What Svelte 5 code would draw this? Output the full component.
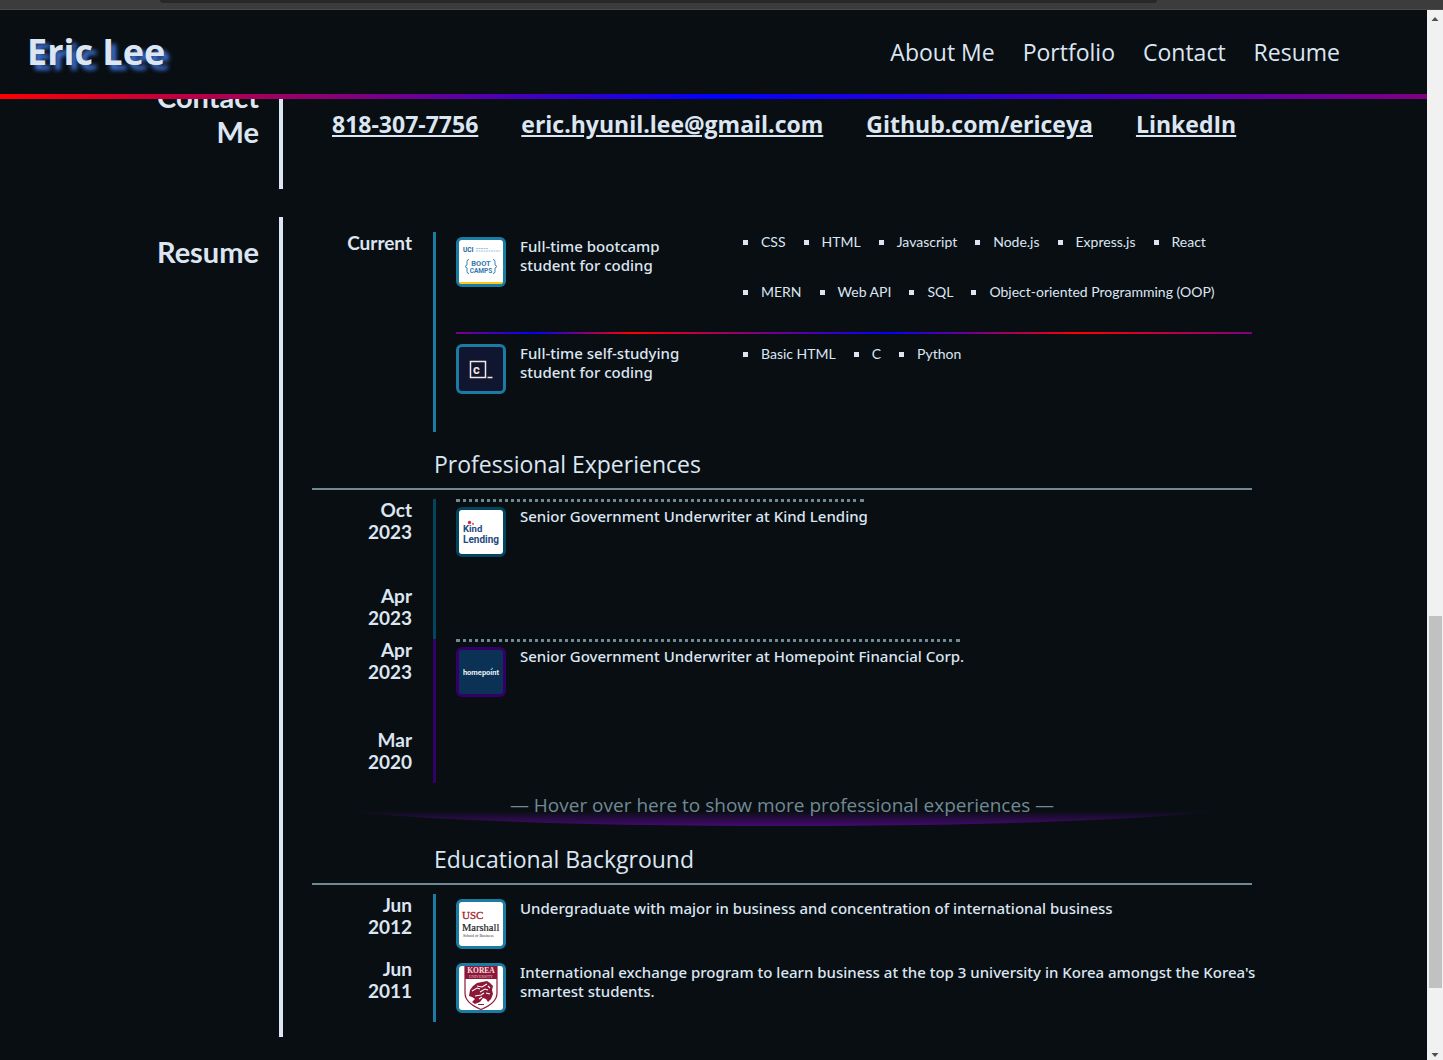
<script>
  const navLinks = ['About Me', 'Portfolio', 'Contact', 'Resume'];
  const contacts = ['818-307-7756', 'eric.hyunil.lee@gmail.com', 'Github.com/ericeya', 'LinkedIn'];
  const studies = [
    {
      logo: 'uci',
      text: 'Full-time bootcamp student for coding',
      skills: [
        ['CSS', 'HTML', 'Javascript', 'Node.js', 'Express.js', 'React'],
        ['MERN', 'Web API', 'SQL', 'Object-oriented Programming (OOP)'],
      ],
    },
    {
      logo: 'codecademy',
      text: 'Full-time self-studying student for coding',
      skills: [['Basic HTML', 'C', 'Python']],
    },
  ];
  const jobs = [
    { logo: 'kind', tone: 'navy', to: ['Oct', '2023'], from: ['Apr', '2023'], text: 'Senior Government Underwriter at Kind Lending' },
    { logo: 'homepoint', tone: 'violet', to: ['Apr', '2023'], from: ['Mar', '2020'], text: 'Senior Government Underwriter at Homepoint Financial Corp.' },
  ];
  const schools = [
    { logo: 'usc', date: ['Jun', '2012'], text: 'Undergraduate with major in business and concentration of international business' },
    { logo: 'korea', date: ['Jun', '2011'], text: "International exchange program to learn business at the top 3 university in Korea amongst the Korea's smartest students." },
  ];
</script>

{#snippet date(parts)}
  <p class="date">{parts[0]}<br />{parts[1]}</p>
{/snippet}

{#snippet logo(name)}
  <svg class="logo" viewBox="0 0 44 44" aria-hidden="true">
    {#if name === 'uci'}
      <rect width="44" height="44" fill="#fff" />
      <text x="4" y="12" class="sans heavy" font-size="6.500" fill="#1c5f9c">UCI</text>
      <path d="M17 8.500h12M17 11h25" stroke="#a9c4dc" stroke-width="1" stroke-dasharray="2 .5" />
      <path d="M10 19.500q-2 0-2 2v3.500l-2 1.500 2 1.500v3.500q0 2 2 2M34 19.500q2 0 2 2v3.500l2 1.500-2 1.500v3.500q0 2-2 2" fill="none" stroke="#3c80b4" />
      <text x="22" y="25.500" class="sans heavy mid" font-size="7.500" fill="#3477ae">BOOT</text>
      <text x="22" y="33" class="sans heavy mid" font-size="6.500" fill="#3477ae">CAMPS</text>
      <rect y="42" width="44" height="2" fill="#fdc913" />
    {:else if name === 'codecademy'}
      <rect width="44" height="44" fill="#10162f" />
      <path d="M11.500 14.500h15v16h-15zM28.500 30.500h5" fill="none" stroke="#f3e6e2" stroke-width="1.500" />
      <text x="17.500" y="27" class="sans heavy mid" font-size="13" fill="#f3e6e2">c</text>
    {:else if name === 'kind'}
      <rect width="44" height="44" fill="#fff" />
      <circle cx="10.500" cy="12.500" r="1.700" fill="#d8283f" />
      <circle cx="14" cy="13.800" r="1.100" fill="#ee5a45" />
      <text x="4" y="21.500" class="sans heavy" font-size="9.500" fill="#1f4a80">Kind</text>
      <text x="4" y="32.500" class="sans heavy" font-size="10" fill="#1f4a80">Lending</text>
    {:else if name === 'homepoint'}
      <rect width="44" height="44" fill="#0b3155" />
      <text x="22" y="25" class="sans heavy mid" font-size="7.500" fill="#e9eff4">homepoint</text>
      <path d="M32.500 18.500h1.500" stroke="#26b5d8" stroke-width="1.500" />
    {:else if name === 'usc'}
      <rect width="44" height="44" fill="#fff" />
      <text x="3" y="17" class="serif" font-size="11" fill="#a2242a" stroke="#a2242a" stroke-width=".3">USC</text>
      <text x="3" y="28.500" class="serif" font-size="10.500" fill="#222" stroke="#222" stroke-width=".2">Marshall</text>
      <text x="4" y="35" class="serif" font-size="4" fill="#333">School of Business</text>
    {:else}
      <rect width="44" height="44" fill="#fff" />
      <path d="M6 0h32v27q0 10-16 16.500Q6 37 6 27z" fill="#fff" stroke="#8d1737" stroke-width="1.200" />
      <path d="M6 0h32v13H6z" fill="#8d1737" />
      <text x="22" y="7" class="serif heavy mid" font-size="7.500" fill="#f5e3e8">KOREA</text>
      <text x="22" y="11.900" class="serif mid" font-size="4" fill="#e7c2cd">UNIVERSITY</text>
      <path d="M11 24l3-4 4-3 5-1 5-1 3 2 3 3-1 4 1 4-2 5-3 3-2-3-3-1-3 4-5 2-3-2 3-3-3-2-3-1z" fill="#8d1737" />
      <path d="M13 25l5-3 3 1M18 20l5 1 5-3M21 26l5-3 3 1M16 30l6-1 3-2M27 27l4 1M29 20l2 2M20 33l3-2" fill="none" stroke="#fff" stroke-width="1.100" />
      <path d="M19 38.500h6" stroke="#8d1737" stroke-width="1.200" />
    {/if}
  </svg>
{/snippet}

<div class="page">
  <div class="chrome"><div class="omnibox"></div></div>
  <div class="viewport">
    <div class="site">
      <header>
        <h1>Eric Lee</h1>
        <nav>
          {#each navLinks as link}<a href="#top">{link}</a>{/each}
        </nav>
      </header>

      <main>
        <section class="contact">
          <h2>Contact<br />Me</h2>
          <div class="body links">
            {#each contacts as contact}<a href="#contact">{contact}</a>{/each}
          </div>
        </section>

        <section class="resume">
          <h2>Resume</h2>
          <div class="body">
            <div class="entry current">
              <div class="dates"><p class="date">Current</p></div>
              <div class="detail teal">
                {#each studies as study}
                  <article class="study">
                    {@render logo(study.logo)}
                    <p>{study.text}</p>
                    <div class="skills">
                      {#each study.skills as row}
                        <ul>
                          {#each row as skill}<li>{skill}</li>{/each}
                        </ul>
                      {/each}
                    </div>
                  </article>
                {/each}
              </div>
            </div>

            <h3>Professional Experiences</h3>
            {#each jobs as job}
              <div class="entry job">
                <div class="dates">
                  {@render date(job.to)}
                  {@render date(job.from)}
                </div>
                <div class="detail {job.tone}">
                  <article class="dotted">
                    {@render logo(job.logo)}
                    <p>{job.text}</p>
                  </article>
                </div>
              </div>
            {/each}
            <p class="more">— Hover over here to show more professional experiences —</p>

            <h3>Educational Background</h3>
            {#each schools as school}
              <div class="entry school">
                <div class="dates">{@render date(school.date)}</div>
                <div class="detail teal">
                  <article>
                    {@render logo(school.logo)}
                    <p>{school.text}</p>
                  </article>
                </div>
              </div>
            {/each}
          </div>
        </section>
      </main>
    </div>

    <div class="scrollbar" aria-hidden="true">
      <svg viewBox="0 0 16 17"><path d="M4.500 11h7L8 7z" fill="#505050" /></svg>
      <div class="track"><div class="thumb"></div></div>
      <svg viewBox="0 0 16 17"><path d="M4.500 10h7L8 14z" fill="#505050" /></svg>
    </div>
  </div>
</div>

<style>
  :global(body) {
    background: #090e12;
  }
  .page {
    display: flex;
    flex-direction: column;
    height: 100vh;
    overflow: hidden;
    color: #dce6f2;
    font-family: 'Trebuchet MS', 'Open Sans', sans-serif;
    font-size: 15px;
    line-height: 19px;
    font-variant-ligatures: none;
  }
  h1, h2, h3, p, ul {
    margin: 0;
    padding: 0;
  }
  a {
    color: inherit;
  }
  .chrome {
    flex: none;
    height: 9px;
    padding: 0 286px 0 160px;
    background: #3c3c3c;
    border-bottom: 1px solid #4a4a4a;
  }
  .omnibox {
    height: 3px;
    background: #282828;
    border-radius: 0 0 8px 8px;
  }
  .viewport {
    flex: 1;
    min-height: 0;
    display: grid;
    grid-template-columns: minmax(0, 1fr) 16px;
  }
  .site {
    display: flex;
    flex-direction: column;
    min-height: 0;
  }
  header {
    flex: none;
    display: flex;
    align-items: center;
    justify-content: space-between;
    height: 84px;
    padding: 0 87px 0 27px;
    border-bottom: 5px solid;
    border-image: linear-gradient(to right, red, blue, purple) 1;
  }
  h1 {
    font-size: 36px;
    font-weight: 700;
    line-height: 44px;
    text-shadow: 5px 5px 4px #3f74d8;
  }
  nav {
    display: flex;
    gap: 28px;
    font-size: 23px;
    line-height: 30px;
  }
  nav a {
    text-decoration: none;
  }
  main {
    flex: 1;
    min-height: 0;
    overflow: hidden;
  }
  section {
    display: grid;
    grid-template-columns: 279px minmax(0, 1fr);
    margin-bottom: 28px;
  }
  h2 {
    padding-right: 20px;
    font-family: Lato, sans-serif;
    font-size: 29px;
    line-height: 35px;
    text-align: right;
  }
  .body {
    border-left: 4px solid #dce6f2;
    padding: 15px 175px 15px 29px;
  }
  .contact {
    height: 110px;
    margin-top: -20px;
  }
  .links {
    display: flex;
    gap: 43px;
    padding: 29px 20px 0 49px;
    font-size: 23px;
    line-height: 32px;
    font-weight: 700;
    white-space: nowrap;
  }
  .resume h2 {
    padding-top: 17px;
  }
  .entry {
    display: grid;
    grid-template-columns: 121px minmax(0, 1fr);
  }
  .dates {
    display: flex;
    flex-direction: column;
    justify-content: space-between;
    padding-right: 21px;
    text-align: right;
  }
  .date {
    font-family: Lato, sans-serif;
    font-size: 19px;
    line-height: 22px;
    font-weight: bold;
  }
  .detail {
    border-left: 3px solid var(--tone);
    padding-left: 20px;
  }
  .detail p {
    margin-right: -4px;
    font-family: 'Trebuchet MS', 'Noto Sans', sans-serif;
    font-weight: 500;
  }
  .teal {
    --tone: #1c7ba3;
  }
  .navy {
    --tone: #03455c;
  }
  .violet {
    --tone: #320068;
  }
  article {
    display: flex;
    align-items: flex-start;
    gap: 14px;
    padding-top: 5px;
  }
  .logo {
    flex: none;
    width: 44px;
    height: 44px;
    border: 3px solid var(--tone);
    border-radius: 6px;
    background: var(--tone);
  }
  .current {
    height: 200px;
  }
  .study {
    display: grid;
    grid-template-columns: 50px 209px minmax(0, 1fr);
    padding-top: 10px;
  }
  .study > p {
    padding-right: 30px;
  }
  .study:first-child {
    height: 95px;
    padding-top: 5px;
    border-bottom: 2px solid;
    border-image: linear-gradient(to right, purple, blue 10%, red 22%, blue 54%, red 78%, purple) 1;
  }
  .study:first-child .skills {
    margin-top: -5px;
  }
  .skills {
    display: flex;
    flex-direction: column;
    gap: 30px;
    font-family: Lato, sans-serif;
    font-size: 14px;
    line-height: 20px;
    white-space: nowrap;
  }
  ul {
    display: flex;
    gap: 18px;
    list-style: none;
  }
  li {
    display: flex;
    align-items: center;
    gap: 13px;
  }
  li::before {
    content: '';
    width: 5px;
    height: 5px;
    background: #dce6f2;
  }
  h3 {
    padding: 17px 0 9px 122px;
    margin-bottom: 9px;
    border-bottom: 2px solid #708a94;
    font-size: 23px;
    font-weight: normal;
    line-height: 30px;
  }
  .job {
    min-height: 140px;
  }
  .job .dates {
    padding-bottom: 10px;
  }
  .job + .job {
    min-height: 144px;
  }
  .dotted {
    width: fit-content;
    border-top: 3px dotted #708a94;
  }
  .dotted p {
    white-space: nowrap;
  }
  .more {
    height: 43px;
    margin-bottom: 1px;
    color: #708a94;
    background: linear-gradient(transparent 28px, #430a70);
    border-radius: 0 0 50% 50% / 0 0 24px 24px;
    font-size: 19px;
    line-height: 44px;
    text-align: center;
  }
  .school {
    min-height: 64px;
  }
  .scrollbar {
    display: flex;
    flex-direction: column;
    background: #f1f1f1;
  }
  .track {
    flex: 1;
    display: grid;
    grid-template-rows: 589fr 372fr 55fr;
    padding: 0 1px 0 2px;
  }
  .thumb {
    grid-row: 2;
    background: #c1c1c1;
  }
  .sans {
    font-family: Roboto, sans-serif;
  }
  .serif {
    font-family: 'Liberation Serif', serif;
  }
  .heavy {
    font-weight: bold;
  }
  .mid {
    text-anchor: middle;
  }
</style>
